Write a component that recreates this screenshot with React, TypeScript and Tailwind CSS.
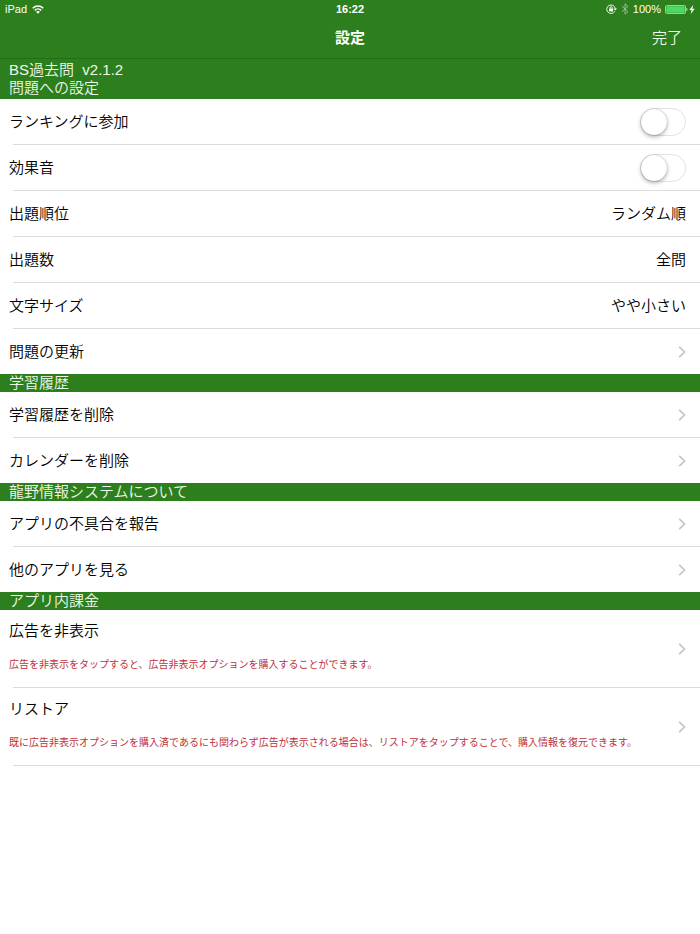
import React, { useState } from 'react';

const WifiIcon = () => (
    <svg className="w-3 h-[9px]" viewBox="0 0 24 18" fill="none" stroke="currentColor" strokeWidth={3}>
        <path d="M1.5 6.5C7.5 0.5 16.5 0.5 22.5 6.5" />
        <path d="M5.5 10.8C9.3 7 14.7 7 18.5 10.8" />
        <path d="M12 17.5L8 13.6C10.3 11.5 13.7 11.5 16 13.6Z" fill="currentColor" stroke="none" />
    </svg>
);

const RotationLockIcon = () => (
    <svg className="w-[11px] h-[10px]" viewBox="0 0 22 20" fill="none" stroke="currentColor" strokeWidth={1.8}>
        <path d="M17.5 14.5A8.5 8.5 0 1 1 18.4 9" />
        <path d="M14.8 9H22L18.4 13.2Z" fill="currentColor" stroke="none" />
        <rect x="6.2" y="9" width="8" height="6" rx="0.8" fill="currentColor" stroke="none" />
        <path d="M8 9.5V7.5a2.2 2.2 0 0 1 4.4 0V9.5" />
    </svg>
);

const BluetoothIcon = () => (
    <svg className="w-[8px] h-[12px] opacity-50" viewBox="0 0 16 24" fill="none" stroke="currentColor" strokeWidth={2}>
        <path d="M2 6.5L14 17.2L8 22.5V1.5L14 6.8L2 17.5" />
    </svg>
);

const BatteryIcon = () => (
    <svg className="w-[23px] h-[9px]" viewBox="0 0 46 18" fill="none">
        <rect x="1" y="1" width="40" height="16" rx="2" stroke="#d6ecd0" strokeWidth={1.4} />
        <rect x="2.6" y="2.6" width="36.8" height="12.8" rx="1" fill="#4cd964" />
        <path d="M43 6C45.4 6.6 45.4 11.4 43 12Z" fill="#fff" />
    </svg>
);

const BoltIcon = () => (
    <svg className="w-[6px] h-[9px]" viewBox="0 0 12 18" fill="currentColor">
        <path d="M8.5 0L0.5 10.2H5.2L3.5 18L11.5 7.4H6.8Z" />
    </svg>
);

const Chevron = () => (
    <svg className="w-2 h-3 shrink-0" viewBox="0 0 8 12" fill="none" stroke="#c3c3c8" strokeWidth={1.6}>
        <path d="M1.2 0.8L6.6 6L1.2 11.2" />
    </svg>
);

interface SectionProps {
    title: string;
    children: React.ReactNode;
}

const Section: React.FC<SectionProps> = ({ title, children }) => (
    <section>
        <h2 className="bg-[#2d7f1d] px-[9px] leading-[18px] text-[#eef7eb]">{title}</h2>
        <ul>{children}</ul>
    </section>
);

// The separator starts a little to the right of the label
const Row: React.FC<{ last?: boolean; children: React.ReactNode }> = ({ last, children }) => (
    <li>
        {children}
        {!last && <hr className="ml-[13px] border-[#dcdcde]" />}
    </li>
);

const SwitchRow: React.FC<{ label: string }> = ({ label }) => {
    const [on, setOn] = useState(false);
    return (
        <Row>
            <label className="flex h-[45px] items-center justify-between pl-[9px] pr-[14px]">
                <span className="leading-5">{label}</span>
                <input
                    type="checkbox"
                    role="switch"
                    checked={on}
                    onChange={(e) => setOn(e.target.checked)}
                    className="flex h-7 w-[46px] appearance-none items-center rounded-full border border-[#e2e2e2] bg-white before:block before:size-[26px] before:rounded-full before:bg-white before:shadow-[0_2px_4px_rgba(0,0,0,0.3),0_0_1px_rgba(0,0,0,0.4)] checked:justify-end checked:bg-[#4cd964]"
                />
            </label>
        </Row>
    );
};

const ValueRow: React.FC<{ label: string; value: string }> = ({ label, value }) => (
    <Row>
        <button type="button" className="flex h-[45px] w-full items-center justify-between pl-[9px] pr-[14px]">
            <span className="leading-5">{label}</span>
            <span className="leading-5">{value}</span>
        </button>
    </Row>
);

const LinkRow: React.FC<{ label: string; last?: boolean }> = ({ label, last }) => (
    <Row last={last}>
        <button type="button" className="flex h-[45px] w-full items-center justify-between pl-[9px] pr-[14px]">
            <span className="leading-5">{label}</span>
            <Chevron />
        </button>
    </Row>
);

const PurchaseRow: React.FC<{ label: string; note: string }> = ({ label, note }) => (
    <Row>
        <button type="button" className="flex w-full items-center justify-between pl-[9px] pr-[14px] text-left">
            <span className="flex flex-col gap-[18px] pt-3 pb-[15px]">
                <span className="leading-[18px]">{label}</span>
                <span className="text-[10px] leading-[14px] font-normal text-[#c0323a]">{note}</span>
            </span>
            <Chevron />
        </button>
    </Row>
);

export default function App() {
    return (
        <div className="min-h-screen bg-white font-['Liberation_Sans','Noto_Sans_CJK_JP',sans-serif] text-[15px] font-[350] text-black">
            <header className="border-b border-[#246c17] bg-[#2d7f1d] text-white">
                <div className="grid h-[18px] grid-cols-3 items-center px-[5px] text-[11px] font-normal">
                    <div className="flex items-center gap-[5px]">
                        <span>iPad</span>
                        <WifiIcon />
                    </div>
                    <time className="text-center font-bold">16:22</time>
                    <div className="flex items-center justify-end gap-[4px]">
                        <RotationLockIcon />
                        <BluetoothIcon />
                        <span>100%</span>
                        <div className="flex items-center gap-px">
                            <BatteryIcon />
                            <BoltIcon />
                        </div>
                    </div>
                </div>
                <nav className="grid h-10 grid-cols-3 items-center px-[18px]">
                    <h1 className="col-start-2 text-center font-bold">設定</h1>
                    <button type="button" className="justify-self-end text-[#eef7eb]">完了</button>
                </nav>
            </header>

            <main>
                <p className="bg-[#2d7f1d] px-[9px] pt-[2px] leading-[18px] whitespace-pre text-[#eef7eb]">BS過去問  v2.1.2</p>
                <div className="bg-[#2d7f1d] pb-[2px]">
                    <h2 className="px-[9px] leading-[18px] text-[#eef7eb]">問題への設定</h2>
                </div>
                <ul>
                    <SwitchRow label="ランキングに参加" />
                    <SwitchRow label="効果音" />
                    <ValueRow label="出題順位" value="ランダム順" />
                    <ValueRow label="出題数" value="全問" />
                    <ValueRow label="文字サイズ" value="やや小さい" />
                    <LinkRow label="問題の更新" last />
                </ul>
                <Section title="学習履歴">
                    <LinkRow label="学習履歴を削除" />
                    <LinkRow label="カレンダーを削除" last />
                </Section>
                <Section title="龍野情報システムについて">
                    <LinkRow label="アプリの不具合を報告" />
                    <LinkRow label="他のアプリを見る" last />
                </Section>
                <Section title="アプリ内課金">
                    <PurchaseRow
                        label="広告を非表示"
                        note="広告を非表示をタップすると、広告非表示オプションを購入することができます。"
                    />
                    <PurchaseRow
                        label="リストア"
                        note="既に広告非表示オプションを購入済であるにも関わらず広告が表示される場合は、リストアをタップすることで、購入情報を復元できます。"
                    />
                </Section>
            </main>
        </div>
    );
}
